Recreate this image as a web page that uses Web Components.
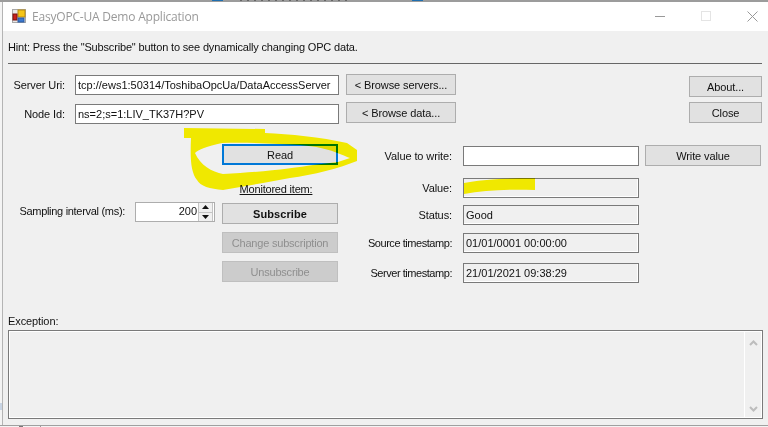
<!DOCTYPE html>
<html>
<head>
<meta charset="utf-8">
<title>EasyOPC-UA Demo Application</title>
<style>
    html, body { margin: 0; padding: 0; width: 768px; height: 427px; overflow: hidden; }
    body
    {
        background:
            linear-gradient(#c8d4e4, #c8d4e4) 0 403px / 2px 7px no-repeat,
            linear-gradient(#777, #777) 19px 426px / 4px 1px no-repeat,
            linear-gradient(#999, #999) 40px 426px / 1px 1px no-repeat,
            #f4f4f4;
        font: 11px "Liberation Sans", Arial, sans-serif;
        letter-spacing: -.1px;
        color: #111;
    }
</style>
</head>
<body>
<opc-demo-window></opc-demo-window>

<script>
class WinTitlebar extends HTMLElement
{
    constructor()
    {
        super();
        this.attachShadow({mode: 'open'}).innerHTML = `
            <style>
                :host
                {
                    display: flex;
                    align-items: center;
                    height: 29px;
                    margin-right: -7px;
                    padding-bottom: 1px;
                    box-sizing: border-box;
                    background: #fff;
                    color: #999;
                    font: 12px "Open Sans", "Liberation Sans", sans-serif;
                    letter-spacing: -.2px;
                    flex: none;
                }
                svg { display: block; flex: none; }
                .icon { margin: 0 6px 0 9px; }
                .text { flex: 1; }
                .caption { width: 46px; display: flex; justify-content: center; }
            </style>
            <svg class="icon" width="14" height="14" viewBox="0 0 14 14">
                <rect x=".5" y=".5" width="13" height="13" fill="#e8e8e8" stroke="#a8a8a8"/>
                <rect x="6" y="1" width="7" height="7" fill="#f5c518" stroke="#b88a10"/>
                <rect x="1" y="5" width="4" height="6" fill="#c8201c" stroke="#7a1410"/>
                <rect x="6" y="9" width="6" height="4" fill="#3a78d0" stroke="#2a5aa0"/>
            </svg>
            <span class="text"><slot></slot></span>
            <span class="caption"><svg width="11" height="11"><path d="M0 5.500h10" stroke="#999"/></svg></span>
            <span class="caption"><svg width="11" height="11"><rect x=".5" y=".5" width="9" height="9" fill="none" stroke="#e4e4e4"/></svg></span>
            <span class="caption"><svg width="11" height="11"><path d="M.5.5l10 10M10.500.5l-10 10" stroke="#999"/></svg></span>
        `;
    }
}
customElements.define("win-titlebar", WinTitlebar);

class WinButton extends HTMLElement
{
    constructor()
    {
        super();
        this.attachShadow({mode: 'open'}).innerHTML = `
            <style>
                :host
                {
                    display: flex;
                    align-items: center;
                    justify-content: center;
                    box-sizing: border-box;
                    height: 21px;
                    background: #e1e1e1;
                    border: 1px solid #adadad;
                    white-space: nowrap;
                }
                :host([disabled]) { background: #ccc; border-color: #bfbfbf; color: #8f8f8f; letter-spacing: -.2px; }
                :host([focused]) { border: 2px solid #0078d7; }
                :host([bold]) { font-weight: bold; letter-spacing: .1px; }
            </style>
            <slot></slot>
        `;
    }
}
customElements.define("win-button", WinButton);

class WinField extends HTMLElement
{
    constructor()
    {
        super();
        this.attachShadow({mode: 'open'}).innerHTML = `
            <style>
                :host
                {
                    display: flex;
                    align-items: center;
                    box-sizing: border-box;
                    height: 20px;
                    padding-left: 2px;
                    background: #fff;
                    border: 1px solid #7a7a7a;
                    letter-spacing: 0;
                    white-space: nowrap;
                    overflow: hidden;
                }
                :host([readonly])
                {
                    background: #f0f0f0;
                    box-shadow: inset -1px -1px 0 #fff;
                }
            </style>
            <slot></slot>
        `;
    }
}
customElements.define("win-field", WinField);

class WinSpinner extends HTMLElement
{
    constructor()
    {
        super();
        this.attachShadow({mode: 'open'}).innerHTML = `
            <style>
                :host
                {
                    display: flex;
                    box-sizing: border-box;
                    height: 20px;
                    padding-right: 1px;
                    background: #fff;
                    border: 1px solid #adadad;
                }
                .value { flex: 1; text-align: right; line-height: 16px; letter-spacing: 0; }
                .arrows { width: 13px; margin-left: 1px; display: flex; flex-direction: column; background: #f0f0f0; border: 1px solid #c4c4c4; border-width: 0 1px; }
                .arrows span { flex: 1; display: flex; align-items: center; justify-content: center; }
                .arrows span + span { border-top: 1px solid #c4c4c4; }
                svg { display: block; }
            </style>
            <span class="value"><slot></slot></span>
            <span class="arrows">
                <span><svg width="7" height="4"><path d="M3.500 0L7 4H0z" fill="#111"/></svg></span>
                <span><svg width="7" height="4"><path d="M0 0h7L3.500 4z" fill="#111"/></svg></span>
            </span>
        `;
    }
}
customElements.define("win-spinner", WinSpinner);

class WinMemo extends HTMLElement
{
    constructor()
    {
        super();
        this.attachShadow({mode: 'open'}).innerHTML = `
            <style>
                :host
                {
                    display: flex;
                    justify-content: flex-end;
                    box-sizing: border-box;
                    height: 89px;
                    background: #f0f0f0;
                    border: 1px solid #7a7a7a;
                    box-shadow: inset 1px 1px 0 #fff, inset -1px -1px 0 #fff;
                }
                .bar
                {
                    width: 16px;
                    margin: 1px 1px 1px 0;
                    border-left: 1px solid #fff;
                    display: flex;
                    flex-direction: column;
                    align-items: center;
                    justify-content: space-between;
                    padding: 8px 0 5px;
                }
                svg { display: block; }
            </style>
            <div class="bar">
                <svg width="9" height="6"><path d="M1 5l3.500-3.500L8 5" fill="none" stroke="#bdbdbd" stroke-width="2"/></svg>
                <svg width="9" height="6"><path d="M1 1l3.500 3.500L8 1" fill="none" stroke="#bdbdbd" stroke-width="2"/></svg>
            </div>
        `;
    }
}
customElements.define("win-memo", WinMemo);

class OpcDemoWindow extends HTMLElement
{
    constructor()
    {
        super();
        this.attachShadow({mode: 'open'}).innerHTML = `
            <style>
                :host
                {
                    display: flex;
                    flex-direction: column;
                    position: relative;
                    box-sizing: border-box;
                    width: 768px;
                    height: 426px;
                    padding-top: 2px;
                    border-bottom: 1px solid #a0a0a0;
                    overflow: hidden;
                }
                /* what shows of the desktop above the window */
                :host::before
                {
                    content: "";
                    position: absolute;
                    left: 0;
                    top: 0;
                    right: 0;
                    height: 2px;
                    background:
                        linear-gradient(#1f6fb0, #1f6fb0) 212px 0 / 11px 1px no-repeat,
                        linear-gradient(#1f6fb0, #1f6fb0) 412px 0 / 11px 1px no-repeat,
                        repeating-linear-gradient(90deg, #666 0 2px, #9c9c9c 2px 7px) 240px 0 / 108px 1px no-repeat,
                        #9c9c9c;
                }
                .frame
                {
                    flex: 1;
                    display: flex;
                    flex-direction: column;
                    margin-left: 2px;
                    background: #f0f0f0;
                    border-left: 1px solid #b4b4b4;
                    min-height: 0;
                }
                .content { flex: 1; padding: 0 5px; display: flex; flex-direction: column; }

                .hint { height: 32px; line-height: 32px; white-space: nowrap; letter-spacing: -.16px; }
                .rule { height: 1px; background: #666; width: 754px; flex: none; }

                .connection
                {
                    display: grid;
                    grid-template-columns: 57px 274px 117px 1fr 73px;
                    grid-template-rows: 28px 22px;
                    margin-top: 10px;
                    width: 754px;
                }
                .label { text-align: right; white-space: nowrap; line-height: 20px; }
                .connection .row1 { margin-top: 1px; }
                .connection .row2 { margin-top: 2px; }
                .connection win-field { margin-left: 10px; }
                .connection win-button:not(.side) { margin-left: 7px; }
                .side { grid-column: 5; }

                .lower { display: flex; margin-top: 20px; }
                .actions
                {
                    flex: none;
                    display: grid;
                    grid-template-columns: 117px 10px 80px 7px 116px;
                    align-content: start;
                }
                .actions win-button, .monitored { grid-column: 5; }
                .monitored
                {
                    margin-top: 17px;
                    padding-right: 8px;
                    height: 15px;
                    line-height: 15px;
                    text-align: center;
                    text-decoration: underline;
                    letter-spacing: -.2px;
                }
                .sampling { grid-column: 1; grid-row: 3; margin-top: 4px; letter-spacing: -.3px; }
                .actions win-spinner { grid-column: 3; grid-row: 3; margin-top: 5px; }
                .actions .subscribe { grid-row: 3; margin-top: 6px; }
                .actions .change, .actions .unsubscribe { margin-top: 8px; }

                .values
                {
                    display: grid;
                    grid-template-columns: 90px 11px 176px 6px 116px;
                    margin-left: 24px;
                    align-content: start;
                }
                .values .label { grid-column: 1; }
                .values win-field { grid-column: 3; }
                .values win-button { grid-column: 5; grid-row: 1; margin-top: 1px; }
                .row-write { margin-top: 2px; }
                .row-value { margin-top: 12px; }
                .row-status { margin-top: 7px; }
                .row-source { margin-top: 8px; }
                .row-server { margin-top: 10px; }
                .label.row-source, .label.row-server { letter-spacing: -.45px; }

                .exception { margin-top: 30px; height: 17px; line-height: 16px; }
                win-memo { width: 755px; }

                .marks { position: absolute; left: 0; top: 0; pointer-events: none; mix-blend-mode: multiply; }
            </style>
            <div class="frame">
                <win-titlebar>EasyOPC-UA Demo Application</win-titlebar>
                <div class="content">
                    <div class="hint">Hint: Press the "Subscribe" button to see dynamically changing OPC data.</div>
                    <div class="rule"></div>

                    <div class="connection">
                        <span class="label row1">Server Uri:</span>
                        <win-field class="row1">tcp://ews1:50314/ToshibaOpcUa/DataAccessServer</win-field>
                        <win-button>&lt; Browse servers...</win-button>
                        <span></span>
                        <win-button class="side" style="margin-top:2px">About...</win-button>

                        <span class="label row2">Node Id:</span>
                        <win-field class="row2">ns=2;s=1:LIV_TK37H?PV</win-field>
                        <win-button>&lt; Browse data...</win-button>
                        <span></span>
                        <win-button class="side">Close</win-button>
                    </div>

                    <div class="lower">
                        <div class="actions">
                            <win-button focused style="grid-row:1">Read</win-button>
                            <div class="monitored" style="grid-row:2">Monitored item:</div>
                            <span class="label sampling">Sampling interval (ms):</span>
                            <win-spinner>200</win-spinner>
                            <win-button class="subscribe" bold>Subscribe</win-button>
                            <win-button class="change" disabled>Change subscription</win-button>
                            <win-button class="unsubscribe" disabled>Unsubscribe</win-button>
                        </div>
                        <div class="values">
                            <span class="label row-write">Value to write:</span>
                            <win-field class="row-write"></win-field>
                            <win-button>Write value</win-button>

                            <span class="label row-value">Value:</span>
                            <win-field class="row-value" readonly></win-field>

                            <span class="label row-status">Status:</span>
                            <win-field class="row-status" readonly>Good</win-field>

                            <span class="label row-source">Source timestamp:</span>
                            <win-field class="row-source" readonly>01/01/0001 00:00:00</win-field>

                            <span class="label row-server">Server timestamp:</span>
                            <win-field class="row-server" readonly>21/01/2021 09:38:29</win-field>
                        </div>
                    </div>

                    <div class="exception">Exception:</div>
                    <win-memo></win-memo>
                </div>
            </div>
            <svg class="marks" width="768" height="427" viewBox="0 0 768 427">
                <path d="M184 128L265 129V133C290 134 320 137 347 143L357 150V161C340 168 313 175 290 178L263 183L223 190C210 189 200 186 197 180C191 172 190 160 191 138H184Z
                         M195 153C198 150 207 146 222 143C250 142 280 144 300 145C325 147 335 152 350 158L338 162L313 165C295 168 263 172 223 174C212 172 200 165 195 153Z"
                      fill="#fff700" fill-rule="evenodd"/>
                <path d="M464 183C480 180 500 178 535 178V190C510 189 485 190 464 194Z" fill="#fff700"/>
            </svg>
        `;
    }
}
customElements.define("opc-demo-window", OpcDemoWindow);
</script>
</body>
</html>
